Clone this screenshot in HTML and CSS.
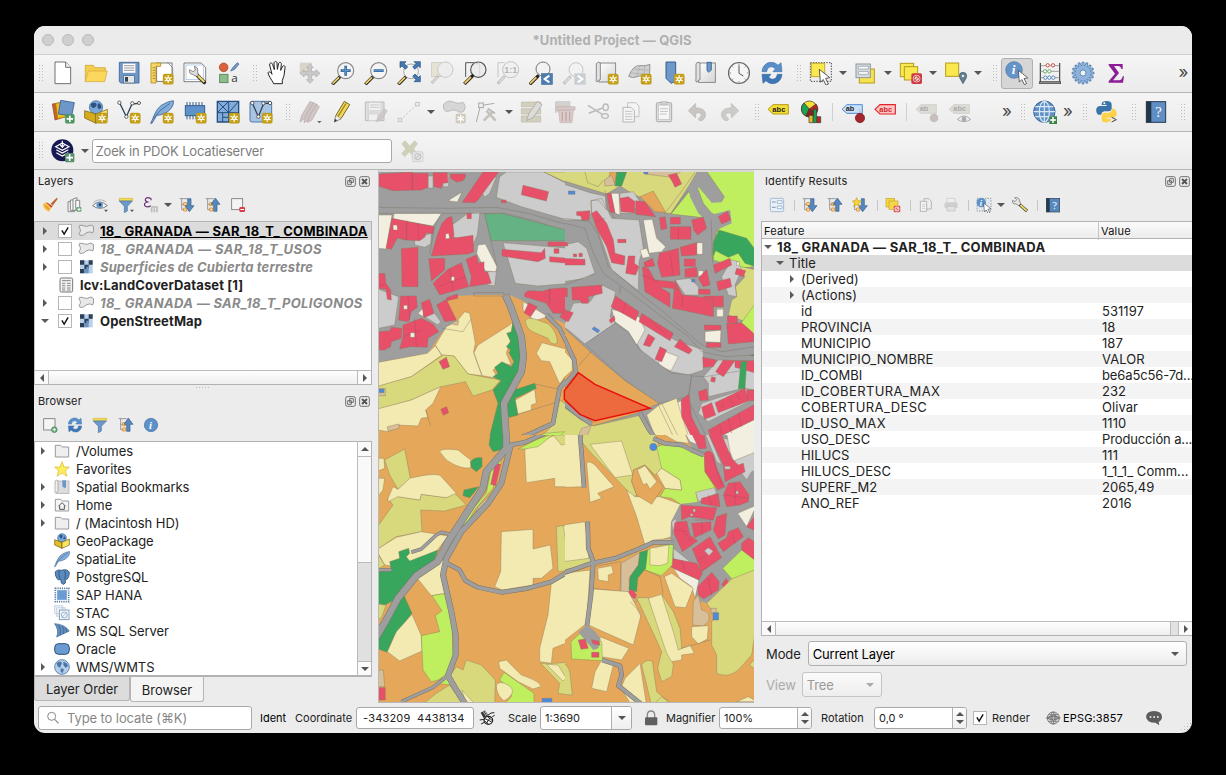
FILE: index.html
```html
<!DOCTYPE html>
<html lang="en">
<head>
<meta charset="utf-8">
<title>*Untitled Project — QGIS</title>
<link rel="stylesheet" href="styles.css">
</head>
<body>
<svg class="defs" width="0" height="0" aria-hidden="true">
<defs>
<linearGradient id="paper" x1="0" y1="0" x2="1" y2="1"><stop offset="0" stop-color="#fff"/><stop offset="1" stop-color="#d4d4d4"/></linearGradient>
<g id="star"><rect x="39" y="39" width="31" height="31" rx="5" fill="#c6a118" stroke="#b08d10"/><path d="M54.500 43V66M44 49L65 60M44 60L65 49" stroke="#fff" stroke-width="3.500"/><circle cx="54.500" cy="54.500" r="6" fill="#fff"/><circle cx="54.500" cy="54.500" r="2.500" fill="#c6a118"/></g>
<g id="plus"><rect x="43" y="43" width="27" height="27" rx="4" fill="#4f9a62" stroke="#3d7d4d"/><path d="M56.500 47V66M47 56.500H66" stroke="#fff" stroke-width="5"/></g>
<g id="handle"><path d="M28 46L4 70" stroke="#222" stroke-width="10"/><path d="M24 49L5 68" stroke="#f0cf66" stroke-width="5.500"/><path d="M26 42L32 48" stroke="#222" stroke-width="7"/></g>
<g id="pointer"><path d="M0 0L30 24 18 26 26 42 19 45 11 29 3 37Z" fill="#fff" stroke="#444" stroke-width="2.500"/></g>
<g id="ban"><rect x="37" y="37" width="32" height="32" rx="5" fill="#cf3a40"/><circle cx="53" cy="53" r="10" fill="#f4d9da" stroke="#fff" stroke-width="2"/><circle cx="53" cy="53" r="8" fill="none" stroke="#cf3a40" stroke-width="3"/><path d="M47 59L59 47" stroke="#cf3a40" stroke-width="3"/></g>

<symbol id="new" viewBox="0 0 72 72"><path d="M12 3H44L59 19V68H12Z" fill="#fff" stroke="#555" stroke-width="2.500"/><path d="M44 3V19H59" fill="#eee" stroke="#555" stroke-width="2.500"/></symbol>
<symbol id="open" viewBox="0 0 72 72"><path d="M4 61V13H28L33 20H64V30" fill="#f5cd4e" stroke="#c89c2c" stroke-width="2"/><path d="M4 62L13 30H70L62 62Z" fill="#fbd75b" stroke="#d3a834" stroke-width="2"/></symbol>
<symbol id="save" viewBox="0 0 72 72"><path d="M7 4H66V66H11L7 61Z" fill="#6d98c9" stroke="#3b6290" stroke-width="2.500"/><rect x="17" y="7" width="39" height="29" fill="#fff" stroke="#5b7fa8"/><path d="M21 14H52M21 21H52M21 28H52" stroke="#999" stroke-width="3"/><rect x="20" y="44" width="32" height="22" fill="#e6e6e6" stroke="#44617f" stroke-width="2"/><rect x="24" y="48" width="9" height="14" fill="#345"/></symbol>
<symbol id="layout" viewBox="0 0 72 72"><rect x="20" y="6" width="46" height="55" fill="#fff" stroke="#666" stroke-width="2.500"/><path d="M3 6H32V16H18V66H3Z" fill="#f8d664" stroke="#b18b1d" stroke-width="2.500"/><path d="M8 20h7M8 28h7M8 36h7M8 44h7M8 52h7" stroke="#8a6a10" stroke-width="2"/><path d="M52 4L68 20V45" fill="none" stroke="#777" stroke-width="2"/><use href="#star"/></symbol>
<symbol id="layoutmgr" viewBox="0 0 72 72"><path d="M3 6H54L68 19V62H3Z" fill="#fff" stroke="#666" stroke-width="2.500"/><rect x="9" y="12" width="52" height="44" fill="none" stroke="#9bb8dc" stroke-width="2"/><path d="M43 43L64 64" stroke="#2b2b2b" stroke-width="11" stroke-linecap="round"/><path d="M44 43L64 63" stroke="#e9d36b" stroke-width="7"/><path d="M34 16Q46 18 44 32L46 44 40 46 28 40Q16 38 20 26L30 32 37 27Z" fill="#ddd" stroke="#555" stroke-width="2"/></symbol>
<symbol id="style" viewBox="0 0 72 72"><circle cx="23" cy="19" r="13" fill="#d8603a" stroke="#a84222" stroke-width="2"/><path d="M44 30L50 20 64 5 69 9 56 25Z" fill="#6d98c9" stroke="#3b6290" stroke-width="2"/><rect x="11" y="40" width="25" height="25" fill="#8ebd8d" stroke="#557c57" stroke-width="2.500"/><text x="46" y="64" font-family="Open Sans" font-size="35" fill="#333">a</text></symbol>
<symbol id="hand" viewBox="0 0 72 72"><path d="M26 68C20 56 10 44 9 35C12 30 18 34 21 40L14 12C13 4 21 4 23 11L28 26 27 6C28 0 36 0 36 6L37 25 41 7C43 2 50 4 49 10L47 28 53 16C56 12 62 15 60 20L57 44 52 58V68Z" fill="#fff" stroke="#222" stroke-width="3"/></symbol>
<symbol id="pan" viewBox="0 0 72 72"><rect x="5" y="5" width="36" height="34" fill="#d9d6c9"/><path d="M36 8L46 20H40V32H54V26L66 37 54 48V42H41V56H47L36 67 25 56H31V42H18V48L6 37 18 26V32H31V20H26Z" fill="#cacaca" stroke="#aaa" stroke-width="2"/></symbol>
<symbol id="zin" viewBox="0 0 72 72"><use href="#handle"/><circle cx="44" cy="29" r="24" fill="#f4f4f4" stroke="#888" stroke-width="3.500"/><path d="M44 14V44M29 29H59" stroke="#31659d" stroke-width="8"/><path d="M44 17V41M32 29H56" stroke="#5e92ca" stroke-width="4"/></symbol>
<symbol id="zout" viewBox="0 0 72 72"><use href="#handle"/><circle cx="44" cy="29" r="24" fill="#f4f4f4" stroke="#888" stroke-width="3.500"/><path d="M29 29H59" stroke="#31659d" stroke-width="8"/><path d="M31 29H57" stroke="#5e92ca" stroke-width="4"/></symbol>
<symbol id="zfull" viewBox="0 0 72 72"><use href="#handle"/><circle cx="42" cy="31" r="22" fill="#f4f4f4" stroke="#999" stroke-width="2.500"/><path d="M9 2H27L22 8 32 18 25 25 15 15 9 20ZM70 2V20L64 15 54 25 47 18 57 8 51 2ZM70 62H51L57 56 47 46 54 39 64 49 70 44Z" fill="#4478ae" stroke="#234d7b" stroke-width="2"/></symbol>
<symbol id="zsel" viewBox="0 0 72 72"><rect x="5" y="5" width="28" height="42" fill="#e6e3d2" stroke="#c4c4c4" stroke-width="2"/><circle cx="46" cy="26" r="23" fill="#ededed" stroke="#c8c8c8" stroke-width="3"/><path d="M26 44L5 66" stroke="#c0c0c0" stroke-width="9"/><path d="M24 47L7 64" stroke="#dedbd0" stroke-width="4"/></symbol>
<symbol id="zlayer" viewBox="0 0 72 72"><path d="M8 48V5H34" fill="none" stroke="#555" stroke-width="3"/><circle cx="46" cy="26" r="23" fill="#ececec" stroke="#555" stroke-width="3.500"/><path d="M32 8H50V44" fill="none" stroke="#ccc" stroke-width="2"/><use href="#handle" y="-1"/></symbol>
<symbol id="znat" viewBox="0 0 72 72"><path d="M6 48V5H26" fill="none" stroke="#c5c5c5" stroke-width="3"/><circle cx="44" cy="26" r="24" fill="#f0f0f0" stroke="#c2c2c2" stroke-width="3"/><path d="M26 46L5 68" stroke="#bdbdbd" stroke-width="9"/><path d="M24 49L8 65" stroke="#e2e0d8" stroke-width="4"/><text x="25" y="35" font-family="Liberation Sans" font-weight="700" font-size="27" fill="#b5b5b5">1:1</text></symbol>
<symbol id="zlast" viewBox="0 0 72 72"><circle cx="42" cy="24" r="21" fill="#f2f2f2" stroke="#777" stroke-width="3"/><g transform="translate(-2 0)"><use href="#handle"/></g><rect x="37" y="37" width="34" height="34" fill="#4d7cae" stroke="#335f8c"/><path d="M61 44L47 54 61 64" fill="none" stroke="#fff" stroke-width="6"/></symbol>
<symbol id="znext" viewBox="0 0 72 72"><circle cx="42" cy="26" r="21" fill="#f2f2f2" stroke="#c5c5c5" stroke-width="3"/><path d="M26 46L5 68" stroke="#bdbdbd" stroke-width="9"/><path d="M24 49L8 65" stroke="#e2e0d8" stroke-width="4"/><rect x="37" y="37" width="34" height="34" fill="#c9ced3"/><path d="M47 44L61 54 47 64" fill="none" stroke="#fff" stroke-width="6"/></symbol>
<symbol id="newmap" viewBox="0 0 72 72"><rect x="12" y="6" width="50" height="57" fill="url(#paper)" stroke="#777" stroke-width="2.500"/><path d="M4 8Q10 0 16 6V56Q10 56 6 63Q2 62 4 50Z" fill="#e2e2e2" stroke="#777" stroke-width="2.500"/><use href="#star"/></symbol>
<symbol id="new3d" viewBox="0 0 72 72"><path d="M2 46Q16 12 34 14Q52 16 66 10L64 48Q40 40 24 48Q14 52 2 46Z" fill="#cfcfcf" stroke="#888" stroke-width="2.500"/><path d="M18 24L62 28M10 36L60 40M36 15L26 46M50 15L48 43" stroke="#aaa" stroke-width="2"/><use href="#star"/></symbol>
<symbol id="bmnew" viewBox="0 0 72 72"><path d="M15 3H44V60L30 67 15 52Z" fill="#6d98c9" stroke="#34608f" stroke-width="3"/><use href="#star"/></symbol>
<symbol id="bmshow" viewBox="0 0 72 72"><rect x="14" y="6" width="50" height="58" fill="url(#paper)" stroke="#777" stroke-width="2.500"/><path d="M6 8Q12 0 18 6V56Q12 56 8 64Q4 62 6 50Z" fill="#e2e2e2" stroke="#777" stroke-width="2.500"/><path d="M39 4H52V27L45 34 39 29Z" fill="#6d98c9" stroke="#34608f" stroke-width="2.500"/></symbol>
<symbol id="clock" viewBox="0 0 72 72"><circle cx="36" cy="36" r="31.500" fill="#f6f6f6" stroke="#666" stroke-width="3.500"/><path d="M36 13V37L49 45" fill="none" stroke="#555" stroke-width="3"/><path d="M36 7V12M36 60V65M7 36H12M60 36H65M16 16l3 3M56 16l-3 3M16 56l3-3M56 56l-3-3" stroke="#777" stroke-width="2.500"/></symbol>
<symbol id="refresh" viewBox="0 0 72 72"><path d="M6 32C8 4 38-4 54 13L63 5 66 32H39L46 24C36 12 22 17 20 32Z" fill="#5a8fca" stroke="#4376ad" stroke-width="2"/><path d="M66 40C64 68 34 76 18 59L9 67 6 40H33L26 48C36 60 50 55 52 40Z" fill="#3f77b6" stroke="#3a6ca3" stroke-width="2"/></symbol>
<symbol id="select" viewBox="0 0 72 72"><rect x="4" y="5" width="63" height="56" fill="none" stroke="#444" stroke-width="3" stroke-dasharray="4 4"/><rect x="7" y="7" width="40" height="40" fill="#f9e94e" stroke="#c7a92b" stroke-width="3"/><use href="#pointer" transform="translate(31 25) scale(1.050)"/></symbol>
<symbol id="selval" viewBox="0 0 72 72"><rect x="16" y="24" width="45" height="42" fill="#f6e44e" stroke="#b59b1c" stroke-width="3"/><rect x="6" y="9" width="43" height="41" fill="#d5dadd" stroke="#8b979e" stroke-width="3"/><path d="M13 16H43V24H13ZM13 32H43V40H13Z" fill="#fff" stroke="#9aa6ae" stroke-width="2.500"/></symbol>
<symbol id="desel" viewBox="0 0 72 72"><rect x="4" y="7" width="40" height="40" fill="#f9e94e" stroke="#b59b1c" stroke-width="3"/><rect x="16" y="17" width="40" height="40" fill="#f9e94e" stroke="#b59b1c" stroke-width="3"/><use href="#ban"/></symbol>
<symbol id="selloc" viewBox="0 0 72 72"><rect x="5" y="6" width="39" height="40" fill="#f9e94e" stroke="#b59b1c" stroke-width="3"/><path d="M57 68C52 58 46 52 46 45A11 11 0 0 1 68 45C68 52 62 58 57 68Z" fill="#647f91" stroke="#3f5666" stroke-width="2"/><circle cx="57" cy="45" r="4" fill="#dfe8ec"/></symbol>
<symbol id="ident" viewBox="0 0 72 72"><circle cx="27" cy="27" r="25" fill="#6594c9" stroke="#4b79ad" stroke-width="2"/><text x="20" y="40" font-family="Liberation Serif" font-style="italic" font-weight="700" font-size="40" fill="#fff">i</text><use href="#pointer" transform="translate(40 28) scale(.95)"/></symbol>
<symbol id="abacus" viewBox="0 0 72 72"><path d="M7 6V62M65 6V62" stroke="#444" stroke-width="3.500"/><path d="M7 14H65M7 31H65M7 50H65" stroke="#777" stroke-width="2"/><rect x="4" y="62" width="64" height="6" fill="#888" stroke="#444" stroke-width="2"/><g stroke-width="3" fill="#fff"><g stroke="#c94a43"><circle cx="29" cy="13" r="5"/><circle cx="45" cy="13" r="5"/></g><g stroke="#65ad68"><circle cx="21" cy="31" r="5"/><circle cx="34" cy="31" r="5"/></g><g stroke="#5684b6"><circle cx="22" cy="50" r="5"/><circle cx="34" cy="50" r="5"/><circle cx="46" cy="50" r="5"/></g></g></symbol>
<symbol id="gear" viewBox="0 0 72 72"><g stroke="#537fb0" stroke-width="9" stroke-linecap="round"><path d="M36 6V66M6 36H66M15 15L57 57M57 15L15 57M24.500 8.300L47.500 63.700M8.300 24.500L63.700 47.500M47.500 8.300L24.500 63.700M63.700 24.500L8.300 47.500"/></g><circle cx="36" cy="36" r="23" fill="#8eb3dc" stroke="#537fb0" stroke-width="1.500"/><g stroke="#8eb3dc" stroke-width="5" stroke-linecap="round"><path d="M36 7V65M7 36H65M16 16L56 56M56 16L16 56M25 9.300L47 62.700M9.300 25L62.700 47M47 9.300L25 62.700M62.700 25L9.300 47"/></g><circle cx="36" cy="36" r="9" fill="#f2f2f2" stroke="#537fb0" stroke-width="2.500"/></symbol>
<symbol id="sigma" viewBox="0 0 72 72"><path d="M14 9H56V24H52Q50 15 42 15H30L45 36 27 58H46Q54 57 56 46H60L57 65H14V61L33 38 14 13Z" fill="#8d1d97"/></symbol>

<symbol id="dsm" viewBox="0 0 72 72"><path d="M4 12L42 6 50 48 12 60Z" fill="#c8612c" stroke="#8c3f18" stroke-width="2"/><path d="M14 10L50 6 54 48 20 56Z" fill="#ecc11f" stroke="#9c7b08" stroke-width="2"/><path d="M29 1L70 8 62 48 22 42Z" fill="#6c97c8" stroke="#35608f" stroke-width="2.500"/><use href="#plus"/></symbol>
<symbol id="gpkg" viewBox="0 0 72 72"><circle cx="36" cy="22" r="20" fill="#79a7d8" stroke="#3b6793" stroke-width="2"/><path d="M20 12Q30 4 36 10T30 24Q22 26 20 12M42 10Q54 12 52 24L44 28 40 20Z" fill="#2d527e"/><path d="M2 32L36 42V70L2 54Z" fill="#d6ac1c" stroke="#6d5607" stroke-width="2"/><path d="M70 28L36 42V70L70 54Z" fill="#fbe46d" stroke="#6d5607" stroke-width="2"/><use href="#star"/></symbol>
<symbol id="shp" viewBox="0 0 72 72"><path d="M8 9L28 50 45 12 66 10" fill="none" stroke="#33465a" stroke-width="4"/><g fill="#fff" stroke="#444" stroke-width="2.500"><circle cx="7" cy="8" r="5"/><circle cx="28" cy="50" r="5"/><circle cx="46" cy="10" r="5"/><circle cx="66" cy="9" r="4.500"/></g><use href="#star"/></symbol>
<symbol id="feather" viewBox="0 0 72 72"><path d="M2 70C12 50 16 30 34 16Q52 4 70 2C72 16 62 30 48 38Q34 46 20 46L6 70Z" fill="#83aedb" stroke="#3a648f" stroke-width="2.500"/><path d="M10 56L30 32 60 10" fill="none" stroke="#3a648f" stroke-width="2.500"/></symbol>
<symbol id="spl" viewBox="0 0 72 72"><use href="#feather"/><use href="#star"/></symbol>
<symbol id="chip" viewBox="0 0 72 72"><path d="M12 6V58M21 6V58M30 6V58M39 6V58M48 6V58M57 6V58" stroke="#3d5c80" stroke-width="3"/><rect x="7" y="17" width="58" height="30" fill="#5f91cb" stroke="#315e91" stroke-width="3"/><use href="#star"/></symbol>
<symbol id="mesh" viewBox="0 0 72 72"><path d="M4 4H68V66H4Z" fill="#82aada" stroke="#254f7e" stroke-width="4"/><path d="M4 38H68M38 4V66M4 4L38 38M38 4L4 38M68 4L38 38M20 38V66M20 52H38" fill="none" stroke="#254f7e" stroke-width="3"/><use href="#star"/></symbol>
<symbol id="gpx" viewBox="0 0 72 72"><rect x="3" y="4" width="65" height="62" rx="6" fill="#a9c4e2" stroke="#4c79aa" stroke-width="3"/><path d="M10 9L28 50 44 11 64 9" fill="none" stroke="#33465a" stroke-width="4"/><g fill="#fff" stroke="#444" stroke-width="2.500"><circle cx="10" cy="9" r="5"/><circle cx="28" cy="50" r="5"/><circle cx="43" cy="10" r="5"/><circle cx="63" cy="9" r="5"/></g><use href="#star"/></symbol>
<symbol id="edits" viewBox="0 0 72 72"><g fill="#cfc6c5" stroke="#b5aaa9" stroke-width="2"><path d="M6 66L10 48 36 4 48 10 22 54Z"/><path d="M18 68L22 50 46 8 58 14 34 58Z"/><path d="M28 68L32 52 54 14 64 20 42 60Z"/></g><path d="M57 63H71L64 70Z" fill="#666"/></symbol>
<symbol id="pencil" viewBox="0 0 72 72"><path d="M10 66L15 46 40 4 56 14 30 56Z" fill="#f2d95b" stroke="#554a14" stroke-width="2.500"/><path d="M21 50L45 10" stroke="#a4881c" stroke-width="4"/><path d="M15 46L30 56 10 66Z" fill="#eee" stroke="#555"/><path d="M10 66L13 57 18 61Z" fill="#222"/></symbol>
<symbol id="saveed" viewBox="0 0 72 72"><path d="M4 6H60V62H4Z" fill="#dcdcdc" stroke="#bdbdbd" stroke-width="3"/><rect x="14" y="8" width="36" height="23" fill="#f0f0f0" stroke="#c6c6c6"/><path d="M18 15H46M18 22H46" stroke="#c4c4c4" stroke-width="2.500"/><rect x="14" y="42" width="28" height="20" fill="#efefef" stroke="#bbb"/><path d="M36 66L42 50 60 26 70 32 54 58Z" fill="#cdc9c8" stroke="#b5b2b1"/></symbol>
<symbol id="line" viewBox="0 0 72 72"><path d="M10 60L62 12" stroke="#c9c9c9" stroke-width="3" stroke-dasharray="7 5"/><path d="M4 55H14V65H4ZM56 7H67V18H56Z" fill="#eee" stroke="#bbb" stroke-width="2.500"/></symbol>
<symbol id="poly" viewBox="0 0 72 72"><path d="M4 14Q16-2 34 6T62 6Q74 18 66 32Q56 42 44 32Q34 26 20 34Q4 38 4 14Z" fill="#d6d6d6" stroke="#bbb" stroke-width="3"/><rect x="41" y="41" width="30" height="29" rx="4" fill="#cfc9bb"/><path d="M56 45V67M46 50L66 61M46 61L66 50" stroke="#fff" stroke-width="4"/></symbol>
<symbol id="vertex" viewBox="0 0 72 72"><path d="M4 66L16 18M22 16L58 10" stroke="#aaa" stroke-width="3"/><rect x="11" y="9" width="14" height="14" fill="#eee" stroke="#aaa" stroke-width="3"/><path d="M26 62L54 34M34 32L62 62" stroke="#c6c2bb" stroke-width="8"/><path d="M38 26L60 40" stroke="#bbb" stroke-width="6"/></symbol>
<symbol id="attr" viewBox="0 0 72 72"><path d="M4 6H62V20H4ZM4 26H62V42H4ZM4 48H62V66H4Z" fill="#d2cfbf" stroke="#bdbaa8" stroke-width="2"/><path d="M20 62L26 42 52 4 66 14 40 52Z" fill="#dedcd8" stroke="#b3b0ab" stroke-width="3"/></symbol>
<symbol id="trash" viewBox="0 0 72 72"><path d="M8 6H50V20M8 6V38" fill="none" stroke="#c7c7c7" stroke-width="4"/><rect x="9" y="7" width="42" height="30" fill="#d3d1cb"/><path d="M12 20H66V30H12Z" fill="#d9c8c8" stroke="#c4adad" stroke-width="2"/><path d="M17 32H61L57 68H21Z" fill="#dccdcd" stroke="#c7b0b0" stroke-width="2"/><path d="M28 36V64M39 36V64M50 36V64" stroke="#c2a6a6" stroke-width="4"/></symbol>
<symbol id="cut" viewBox="0 0 72 72"><path d="M6 16L50 44M8 40L50 24" stroke="#bcbcbc" stroke-width="5"/><ellipse cx="59" cy="22" rx="8" ry="10" fill="none" stroke="#bbb" stroke-width="4"/><ellipse cx="57" cy="48" rx="10" ry="7" fill="none" stroke="#bbb" stroke-width="4"/></symbol>
<symbol id="copy" viewBox="0 0 72 72"><path d="M26 8H50L60 18V50H26Z" fill="#f3f3f3" stroke="#bbb" stroke-width="2.500"/><path d="M12 22H36L46 32V66H12Z" fill="#f5f5f5" stroke="#aaa" stroke-width="2.500"/><path d="M18 34H40M18 42H40M18 50H40M18 58H40" stroke="#bbb" stroke-width="2.500"/></symbol>
<symbol id="paste" viewBox="0 0 72 72"><rect x="13" y="8" width="46" height="57" rx="3" fill="#ddd" stroke="#aaa" stroke-width="3"/><rect x="19" y="15" width="34" height="44" fill="#f6f6f6" stroke="#bbb" stroke-width="2"/><rect x="27" y="4" width="18" height="11" fill="#ccc" stroke="#aaa"/><path d="M24 26H48M24 34H48M24 42H44" stroke="#bbb" stroke-width="2.500"/></symbol>
<symbol id="undo" viewBox="0 0 72 72"><path d="M10 32L32 10V24C54 22 66 36 60 52Q54 64 44 62L40 56Q54 48 46 40Q42 37 32 40V54Z" fill="#c9c5c2" stroke="#b9b4b0" stroke-width="2"/></symbol>
<symbol id="redo" viewBox="0 0 72 72"><path transform="translate(72 0) scale(-1 1)" d="M10 32L32 10V24C54 22 66 36 60 52Q54 64 44 62L40 56Q54 48 46 40Q42 37 32 40V54Z" fill="#cbccca" stroke="#b9bab7" stroke-width="2"/></symbol>
<symbol id="lab" viewBox="0 0 72 72"><path d="M3 28L18 14H64V42H18Z" fill="#f6dd33" stroke="#b59b12" stroke-width="3"/><text x="16" y="35" font-family="Liberation Sans" font-weight="700" font-size="23" fill="#222">abc</text></symbol>
<symbol id="diag" viewBox="0 0 72 72"><circle cx="28" cy="27" r="24" fill="#f6dd33" stroke="#333" stroke-width="2"/><path d="M28 27L12 9A24 24 0 0 0 18 48Z" fill="#22a052" stroke="#333" stroke-width="2"/><path d="M28 27L18 48A24 24 0 0 0 49 40Z" fill="#931c1c" stroke="#333" stroke-width="2"/><path d="M28 27L48 12A24 24 0 0 1 49 40Z" fill="#b92522" stroke="#333" stroke-width="2"/><path d="M27 46H39V68H27Z" fill="#e9bb22" stroke="#333" stroke-width="2"/><path d="M40 28H50V68H40Z" fill="#1c9d4d" stroke="#333" stroke-width="2"/><path d="M51 50H62V68H51Z" fill="#c22720" stroke="#333" stroke-width="2"/></symbol>
<symbol id="labpin" viewBox="0 0 72 72"><path d="M3 28L18 14H64V40H18Z" fill="#c9e0fb" stroke="#4f8bd6" stroke-width="3"/><text x="14" y="34" font-family="Liberation Sans" font-weight="700" font-size="22" fill="#222">ab</text><path d="M56 26V46" stroke="#ccc" stroke-width="7"/><circle cx="57" cy="54" r="14" fill="#a3262c" stroke="#74161b" stroke-width="2"/></symbol>
<symbol id="labred" viewBox="0 0 72 72"><path d="M3 28L18 14H64V42H18Z" fill="#fbc6c4" stroke="#e3242b" stroke-width="3.500"/><text x="16" y="35" font-family="Liberation Sans" font-weight="700" font-size="22" fill="#d21f26">abc</text></symbol>
<symbol id="labg1" viewBox="0 0 72 72"><path d="M3 28L18 14H64V40H18Z" fill="#dedcd6" stroke="#c6c4bd" stroke-width="2"/><text x="14" y="34" font-family="Liberation Sans" font-weight="700" font-size="22" fill="#aaa">ab</text><circle cx="57" cy="54" r="13" fill="#c7bfbe"/></symbol>
<symbol id="labg2" viewBox="0 0 72 72"><path d="M3 28L18 14H64V40H18Z" fill="#dedcd6" stroke="#c6c4bd" stroke-width="2"/><text x="16" y="34" font-family="Liberation Sans" font-weight="700" font-size="22" fill="#aaa">abc</text><path d="M28 58Q48 38 68 58Q48 72 28 58Z" fill="#eee" stroke="#aaa" stroke-width="3"/><circle cx="48" cy="57" r="7" fill="#aaa"/></symbol>
<symbol id="globe" viewBox="0 0 72 72"><circle cx="34" cy="35" r="32" fill="#6392c7" stroke="#38618f" stroke-width="3"/><g fill="none" stroke="#dbe8f6" stroke-width="3.500"><ellipse cx="34" cy="35" rx="15" ry="31"/><path d="M34 3V67M2 35H66M7 20H61M7 50H61"/></g><path d="M49 49H72V72H49Z" fill="#3d8248"/><path d="M60 51V69M51 60H69" stroke="#fff" stroke-width="4.500"/></symbol>
<symbol id="python" viewBox="0 0 72 72"><path d="M22 6Q34 0 46 5Q50 8 50 14V26Q49 33 42 34H28Q20 35 18 44H10Q2 38 4 26Q6 19 14 18H35V15H20Q20 9 22 6Z" fill="#3a74a9"/><path d="M46 64Q34 70 23 65Q19 62 20 54V46Q21 39 28 38H42Q50 36 51 26H58Q66 32 65 46Q62 52 56 53H35V56H48Q49 62 46 64Z" fill="#fed14b"/><circle cx="28" cy="10" r="3" fill="#fff"/><path d="M50 52L64 59 50 66" fill="none" stroke="#444" stroke-width="3"/></symbol>
<symbol id="help" viewBox="0 0 72 72"><rect x="7" y="5" width="58" height="62" fill="#5e8ec4" stroke="#273a50" stroke-width="3"/><rect x="7" y="5" width="15" height="62" fill="#24354a"/><text x="34" y="50" font-family="Liberation Serif" font-size="44" fill="#fff">?</text></symbol>
<symbol id="pdok" viewBox="0 0 72 72"><circle cx="34" cy="34" r="33" fill="#171a52"/><g fill="none" stroke="#fff" stroke-width="3.500"><path d="M34 12L54 23 34 34 14 23Z"/><path d="M16 32L34 42 52 32M16 41L34 51 52 41M34 5V24M27 17L34 25 41 17"/></g><rect x="42" y="42" width="28" height="28" rx="4" fill="#5a8e6f"/><path d="M56 46V66M46 56H66" stroke="#fff" stroke-width="5"/></symbol>
<symbol id="xgrey" viewBox="0 0 72 72"><path d="M4 14L16 4 29 20 44 4 54 14 42 29 52 44 42 56 28 40 14 54 4 44 16 29Z" fill="#cfcfba"/><rect x="37" y="38" width="32" height="30" rx="4" fill="#e4e4e4" stroke="#c8c8c8" stroke-width="2"/><circle cx="53" cy="53" r="9" fill="none" stroke="#bdbdbd" stroke-width="3"/><path d="M46 60L60 46" stroke="#bdbdbd" stroke-width="3"/></symbol>

<symbol id="brush" viewBox="0 0 48 48"><path d="M26 20L44 2 47 6 32 26Z" fill="#b8682a"/><path d="M14 16L32 28 24 36 10 24Z" fill="#c83c35"/><path d="M2 22L12 16 28 32 20 44Q6 40 2 22Z" fill="#f4c04b"/><path d="M10 26L22 38" stroke="#e69a28" stroke-width="4"/></symbol>
<symbol id="addgrp" viewBox="0 0 48 48"><g fill="#f4f4f4" stroke="#777" stroke-width="2.500"><path d="M3 14H22V44H3Z"/><path d="M10 9H28V40H10Z"/><path d="M18 6L30 2V36L18 42Z"/><path d="M26 10H38V34H26Z"/></g><rect x="29" y="30" width="14" height="14" rx="2" fill="#5aa56b"/><path d="M36 32V42M31 37H41" stroke="#fff" stroke-width="3"/></symbol>
<symbol id="eye" viewBox="0 0 48 48"><path d="M2 26Q22 4 46 26Q24 42 2 26Z" fill="#f6f6f6" stroke="#666" stroke-width="2.500"/><circle cx="23" cy="24" r="10" fill="#6f9bcb"/><circle cx="24" cy="23" r="4" fill="#24394e"/><path d="M36 38H48L42 45Z" fill="#555"/><path d="M4 16Q22 2 42 14" fill="none" stroke="#999" stroke-width="2"/></symbol>
<symbol id="filt" viewBox="0 0 48 48"><path d="M3 4H44V11H3Z" fill="#f3dd5a" stroke="#c4a91e" stroke-width="1.500"/><path d="M4 12H43L28 28V42L19 47V28Z" fill="#6c98ca" stroke="#4472a5" stroke-width="2"/></symbol>
<symbol id="filtd" viewBox="0 0 48 48"><use href="#filt"/><path d="M36 38H48L42 45Z" fill="#555"/></symbol>
<symbol id="eps" viewBox="0 0 48 48"><path d="M24 10V5Q14-1 8 5Q4 12 14 15Q2 18 5 26Q12 33 24 26" fill="none" stroke="#6b2e78" stroke-width="3.500"/><path d="M26 46V36Q26 28 32 30H42V46M34 34V46" fill="none" stroke="#bbb" stroke-width="5"/></symbol>
<symbol id="expand" viewBox="0 0 48 48"><path d="M2 5H26M8 5V38H16M8 22H16" fill="none" stroke="#888" stroke-width="2.500"/><path d="M14 17H23V26H14ZM14 33H23V42H14Z" fill="#f7d9a8" stroke="#dd8b25" stroke-width="2.500"/><path d="M26 5H36V26H45L31 44 18 26H26Z" fill="#5687bd" stroke="#335f8f" stroke-width="2"/></symbol>
<symbol id="collapse" viewBox="0 0 48 48"><path d="M2 5H26M8 5V38H16M8 22H16" fill="none" stroke="#888" stroke-width="2.500"/><path d="M14 17H23V26H14ZM14 33H23V42H14Z" fill="#f7d9a8" stroke="#dd8b25" stroke-width="2.500"/><path d="M26 43H36V22H45L31 3 18 22H26Z" fill="#5687bd" stroke="#335f8f" stroke-width="2"/></symbol>
<symbol id="expnew" viewBox="0 0 48 48"><path d="M8 15V38H16" fill="none" stroke="#888" stroke-width="2.500"/><path d="M14 33H23V42H14Z" fill="#f7d9a8" stroke="#dd8b25" stroke-width="2.500"/><path d="M28 5H37V26H46L32 44 19 26H28Z" fill="#5687bd" stroke="#335f8f" stroke-width="2"/><path d="M14 2L18 11 28 12 20 19 23 29 14 23 5 29 8 19 1 12 10 11Z" fill="#f8d73a" stroke="#c59c16" stroke-width="2"/></symbol>
<symbol id="rem" viewBox="0 0 48 48"><rect x="5" y="5" width="33" height="33" fill="#f4f4f4" stroke="#777" stroke-width="2.500"/><rect x="28" y="30" width="17" height="15" rx="4" fill="#dc3c45"/><path d="M31 37.500H42" stroke="#fff" stroke-width="3"/></symbol>
<symbol id="addb" viewBox="0 0 48 48"><rect x="5" y="5" width="34" height="34" fill="#f4f4f4" stroke="#777" stroke-width="2.500"/><circle cx="37" cy="38" r="8.500" fill="#6aab79" stroke="#4b8559" stroke-width="2"/><path d="M37 33V43M32 38H42" stroke="#fff" stroke-width="2.500"/></symbol>
<symbol id="info" viewBox="0 0 48 48"><circle cx="24" cy="24" r="20" fill="#5d91ca" stroke="#44709f" stroke-width="2"/><text x="18" y="35" font-family="Liberation Serif" font-style="italic" font-weight="700" font-size="32" fill="#fff">i</text></symbol>
<symbol id="form" viewBox="0 0 48 48"><rect x="4" y="4" width="40" height="40" rx="4" fill="#e7f0fa" stroke="#a4b9cf" stroke-width="3"/><path d="M25 11H39V19H25ZM25 27H39V35H25Z" fill="#fff" stroke="#91abc8" stroke-width="2.500"/><path d="M9 15H20M9 31H20" stroke="#8194aa" stroke-width="3"/></symbol>
<symbol id="clr" viewBox="0 0 48 48"><rect x="3" y="4" width="26" height="26" fill="#f5d647" stroke="#c7a62a" stroke-width="2"/><rect x="12" y="12" width="27" height="25" fill="#f5d647" stroke="#c7a62a" stroke-width="2"/><rect x="26" y="26" width="20" height="20" rx="3" fill="#dc5a5c"/><circle cx="36" cy="36" r="6" fill="none" stroke="#fff" stroke-width="2.500"/><path d="M32 40L40 32" stroke="#fff" stroke-width="2"/></symbol>
<symbol id="copys" viewBox="0 0 48 48"><path d="M18 5H32L40 13V36H18Z" fill="#eee" stroke="#aaa" stroke-width="2.500"/><path d="M7 13H26V43H7Z" fill="#f5f5f5" stroke="#aaa" stroke-width="2.500"/><path d="M12 22H22M12 28H22M12 34H22" stroke="#bbb" stroke-width="2"/></symbol>
<symbol id="print" viewBox="0 0 48 48"><path d="M12 4H36V18H12Z" fill="#eee" stroke="#c6c6c6" stroke-width="2"/><rect x="4" y="16" width="40" height="18" rx="6" fill="#cfcfcf"/><path d="M12 28H36V42H12Z" fill="#e2e2e2" stroke="#c0c0c0" stroke-width="2"/></symbol>
<symbol id="idsel" viewBox="0 0 48 48"><rect x="3" y="4" width="42" height="38" fill="#dfe7f0" stroke="#888" stroke-width="2.500" stroke-dasharray="4 4"/><circle cx="16" cy="17" r="14" fill="#5d91ca"/><text x="11" y="26" font-family="Liberation Serif" font-style="italic" font-weight="700" font-size="25" fill="#fff">i</text><use href="#pointer" transform="translate(23 18) scale(.72)"/></symbol>
<symbol id="wrench" viewBox="0 0 48 48"><path d="M22 22L45 42" stroke="#333" stroke-width="9"/><path d="M25 24L44 41" stroke="#eed35f" stroke-width="6"/><path d="M8 2Q22 0 23 12L26 20 20 26 12 21Q0 22 1 10L9 14 14 8Z" fill="#e4e4e4" stroke="#666" stroke-width="2"/></symbol>
<symbol id="helps" viewBox="0 0 48 48"><rect x="4" y="4" width="40" height="41" fill="#5687bd" stroke="#2d4055" stroke-width="2"/><rect x="4" y="4" width="10" height="41" fill="#28384b"/><text x="22" y="36" font-family="Liberation Serif" font-size="32" fill="#fff">?</text></symbol>

<symbol id="polyg" viewBox="0 0 48 48"><path d="M3 12Q3 4 12 7T28 10Q40 2 46 10Q49 22 44 30Q36 24 26 29Q16 40 6 37Q0 32 7 25Q9 20 3 12Z" fill="#e8e8e8" stroke="#8b8b8b" stroke-width="2.500"/></symbol>
<symbol id="raster" viewBox="0 0 48 48"><rect x="6" y="4" width="38" height="39" fill="#b8d0ea"/><path d="M6 4H19V17H6ZM32 4H44V17H32ZM19 17H32V30H19ZM6 30H19V43H6Z" fill="#2c3f57"/><path d="M19 30H32V43H19ZM25 23H32V30H25Z" fill="#6b94c0"/></symbol>
<symbol id="table" viewBox="0 0 48 48"><rect x="6" y="3" width="38" height="42" rx="4" fill="#f2f2f2" stroke="#777" stroke-width="3"/><path d="M12 11H38M12 19H22M27 19H38M12 26H22M27 26H38M12 33H22M27 33H38M12 39H22M27 39H38" stroke="#888" stroke-width="3"/></symbol>
<symbol id="folder" viewBox="0 0 48 48"><path d="M4 42V7H20L25 12H44V42Z" fill="#efefef" stroke="#888" stroke-width="2.500"/></symbol>
<symbol id="homef" viewBox="0 0 48 48"><path d="M4 42V7H20L25 12H44V42Z" fill="#f5f5f5" stroke="#888" stroke-width="2.500"/><path d="M13 28L24 17 35 28M17 26V37H31V26" fill="none" stroke="#333" stroke-width="2.500"/></symbol>
<symbol id="fav" viewBox="0 0 48 48"><path d="M24 2L30 18 46 18 34 29 39 46 24 36 9 46 14 29 2 18 18 18Z" fill="#fcee5b" stroke="#d6b22f" stroke-width="2"/></symbol>
<symbol id="sbm" viewBox="0 0 48 48"><rect x="8" y="6" width="37" height="38" fill="#dcdcdc" stroke="#aaa" stroke-width="2"/><path d="M3 6Q7 2 12 5V38Q7 39 5 43Q2 42 3 36Z" fill="#efefef" stroke="#999" stroke-width="2"/><path d="M25 4H36V25L31 28 25 22Z" fill="#6d98c9"/></symbol>
<symbol id="gpk" viewBox="0 0 48 48"><circle cx="24" cy="15" r="13" fill="#79a7d8" stroke="#3b6793" stroke-width="2"/><path d="M15 9Q22 2 26 8L22 18Z M30 8L35 18 28 18Z" fill="#2d527e"/><path d="M2 20L24 28V46L2 36Z" fill="#e4bd25" stroke="#6d5607" stroke-width="2"/><path d="M46 18L24 28V46L46 36Z" fill="#fbe868" stroke="#6d5607" stroke-width="2"/></symbol>
<symbol id="pg" viewBox="0 0 48 48"><path d="M4 8Q12 0 22 4Q40-2 46 10Q46 24 40 30L34 32V42Q28 50 22 42L20 30Q14 36 10 30Q2 20 4 8Z" fill="#5b8abd" stroke="#2c5078" stroke-width="2.500"/><path d="M16 6Q12 18 18 28M32 6Q38 18 32 30" fill="none" stroke="#2c5078" stroke-width="2.500"/></symbol>
<symbol id="hana" viewBox="0 0 48 48"><rect x="4" y="4" width="40" height="40" fill="none" stroke="#4a7097" stroke-width="5" stroke-dasharray="3.300 3.300"/><rect x="9" y="9" width="30" height="30" fill="#6a9bd2" stroke="#fff" stroke-width="1"/></symbol>
<symbol id="stac" viewBox="0 0 48 48"><path d="M2 2H26V26H2Z M8 8H34V34H8Z" fill="#f2f6fa" stroke="#adc0d6" stroke-width="2"/><rect x="16" y="15" width="29" height="29" fill="#f0f5fa" stroke="#7392b4" stroke-width="2.500"/><circle cx="31" cy="30" r="9" fill="none" stroke="#8aa6c5" stroke-width="2.500"/><path d="M24 37L38 22" stroke="#8aa6c5" stroke-width="2"/></symbol>
<symbol id="mssql" viewBox="0 0 48 48"><path d="M2 2Q32 4 46 24L8 42Q16 22 2 2Z" fill="#6592c5" stroke="#3a618c" stroke-width="2"/><path d="M14 6Q24 22 18 36M25 10Q33 20 28 32M34 14Q40 20 37 27" fill="none" stroke="#2f527a" stroke-width="2"/></symbol>
<symbol id="ora" viewBox="0 0 48 48"><rect x="2" y="8" width="44" height="32" rx="12" fill="#6a9bd2" stroke="#2f4f72" stroke-width="3"/></symbol>
<symbol id="wms" viewBox="0 0 48 48"><circle cx="24" cy="24" r="22" fill="#b6cfe9" stroke="#4a76a6" stroke-width="2.500"/><path d="M8 12Q20 4 24 12L18 26Q10 26 8 12ZM28 8Q42 12 42 22L34 26 28 18ZM20 28L30 30 26 42 20 38Z" fill="#4b77a6"/></symbol>
<symbol id="float" viewBox="0 0 33 33"><rect x="2" y="2" width="29" height="29" rx="5" fill="#eee" stroke="#555" stroke-width="2.500"/><path d="M14 8H25V19H14ZM8 14H19V25H8Z" fill="none" stroke="#555" stroke-width="2.500"/></symbol>
<symbol id="close" viewBox="0 0 33 33"><rect x="2" y="2" width="29" height="29" rx="5" fill="#eee" stroke="#555" stroke-width="2.500"/><path d="M9 9L24 24M24 9L9 24" stroke="#555" stroke-width="6"/></symbol>
<symbol id="check" viewBox="0 0 42 42"><path d="M10 19L18 32 32 8" fill="none" stroke="#111" stroke-width="5"/></symbol>
<symbol id="mag" viewBox="0 0 42 42"><circle cx="17" cy="16" r="12" fill="none" stroke="#888" stroke-width="3"/><path d="M26 25L38 37" stroke="#888" stroke-width="3.500"/></symbol>
<symbol id="bug" viewBox="0 0 48 48"><path d="M5 8L18 1 28 16 14 24Z" fill="#333"/><path d="M12 4L22 20M17 2L26 18" stroke="#fff" stroke-width="2"/><ellipse cx="28" cy="31" rx="13" ry="12" fill="#fff" stroke="#222" stroke-width="3.500"/><path d="M18 26L38 36M22 40L34 22M16 32L28 42M26 20L40 32M26 16Q36 6 46 8M2 30L16 28M6 42L18 36M40 20L47 16" stroke="#222" stroke-width="3" fill="none"/></symbol>
<symbol id="lock" viewBox="0 0 48 48"><path d="M13 24V14Q14 3 24 3T35 14V24" fill="none" stroke="#888" stroke-width="4"/><rect x="6" y="22" width="37" height="24" rx="3" fill="#606060"/></symbol>
<symbol id="crs" viewBox="0 0 48 48"><circle cx="25" cy="24" r="18" fill="none" stroke="#777" stroke-width="3"/><ellipse cx="25" cy="24" rx="8" ry="18" fill="none" stroke="#777" stroke-width="2.500"/><path d="M25 6V42M9 14H41M9 34H41" stroke="#777" stroke-width="2.500"/><path d="M1 24L25 13 48 24 25 33Z" fill="#777"/><path d="M12 24H38M25 16V31" stroke="#ccc" stroke-width="2"/></symbol>
<symbol id="bubble" viewBox="0 0 48 48"><path d="M24 3Q47 4 48 20Q48 30 38 36L40 46 28 38Q2 38 0 20Q2 4 24 3Z" fill="#5c5c5c"/><path d="M11 21H16M22 21H27M33 21H38" stroke="#fff" stroke-width="5"/></symbol>
</defs>
</svg>

<div class="window">
  <header class="titlebar"><i></i><i></i><i></i><h1>*Untitled Project — QGIS</h1></header>

  <div class="toolbar main">
    <b class="grip"></b><svg><use href="#new"/></svg><svg><use href="#open"/></svg><svg><use href="#save"/></svg><svg><use href="#layout"/></svg><svg><use href="#layoutmgr"/></svg><svg><use href="#style"/></svg>
    <b class="grip"></b><svg><use href="#hand"/></svg><svg><use href="#pan"/></svg><svg><use href="#zin"/></svg><svg><use href="#zout"/></svg><svg><use href="#zfull"/></svg><svg><use href="#zsel"/></svg><svg><use href="#zlayer"/></svg><svg><use href="#znat"/></svg><svg><use href="#zlast"/></svg><svg><use href="#znext"/></svg><svg><use href="#newmap"/></svg><svg><use href="#new3d"/></svg><svg><use href="#bmnew"/></svg><svg><use href="#bmshow"/></svg><svg><use href="#clock"/></svg><svg><use href="#refresh"/></svg>
    <b class="grip"></b><svg><use href="#select"/></svg><b class="drop"></b><svg><use href="#selval"/></svg><b class="drop"></b><svg><use href="#desel"/></svg><b class="drop"></b><svg><use href="#selloc"/></svg><b class="drop"></b>
    <b class="grip"></b><span class="pressed"><svg><use href="#ident"/></svg></span><svg><use href="#abacus"/></svg><svg><use href="#gear"/></svg><svg><use href="#sigma"/></svg>
    <span class="more end">»</span>
  </div>

  <div class="toolbar">
    <b class="grip"></b><svg><use href="#dsm"/></svg><svg><use href="#gpkg"/></svg><svg><use href="#shp"/></svg><svg><use href="#spl"/></svg><svg><use href="#chip"/></svg><svg><use href="#mesh"/></svg><svg><use href="#gpx"/></svg>
    <b class="grip"></b><svg><use href="#edits"/></svg><svg><use href="#pencil"/></svg><svg><use href="#saveed"/></svg><svg><use href="#line"/></svg><b class="drop"></b><svg><use href="#poly"/></svg><svg><use href="#vertex"/></svg><b class="drop"></b><svg><use href="#attr"/></svg><svg><use href="#trash"/></svg><svg><use href="#cut"/></svg><svg><use href="#copy"/></svg><svg><use href="#paste"/></svg><svg><use href="#undo"/></svg><svg><use href="#redo"/></svg>
    <b class="grip"></b><svg><use href="#lab"/></svg><svg><use href="#diag"/></svg><b class="sep"></b><svg><use href="#labpin"/></svg><svg><use href="#labred"/></svg><b class="sep"></b><svg><use href="#labg1"/></svg><svg><use href="#labg2"/></svg>
    <span class="more mid">»</span><b class="grip"></b><svg><use href="#globe"/></svg><span class="more">»</span><b class="grip"></b><svg><use href="#python"/></svg><b class="grip"></b><svg><use href="#help"/></svg><b class="grip"></b>
  </div>

  <div class="toolbar pdok">
    <b class="grip"></b><svg><use href="#pdok"/></svg><b class="drop"></b><div class="search">Zoek in PDOK Locatieserver</div><svg><use href="#xgrey"/></svg>
  </div>

  <main class="body">
    <section class="left">
      <div class="docktitle"><span>Layers</span><svg><use href="#float"/></svg><svg><use href="#close"/></svg></div>
      <div class="docktools"><svg><use href="#brush"/></svg><svg><use href="#addgrp"/></svg><svg><use href="#eye"/></svg><svg><use href="#filtd"/></svg><svg><use href="#eps"/></svg><b class="drop"></b><svg><use href="#expand"/></svg><svg><use href="#collapse"/></svg><svg><use href="#rem"/></svg></div>
      <div class="layers">
        <ul>
          <li class="sel"><b class="tri"></b><span class="cb"><svg><use href="#check"/></svg></span><svg class="ic"><use href="#polyg"/></svg><em class="name l1">18_ GRANADA — SAR_18_T_ COMBINADA</em></li>
          <li class="off"><b class="tri"></b><span class="cb"></span><svg class="ic"><use href="#polyg"/></svg><em class="name l2">18_ GRANADA — SAR_18_T_USOS</em></li>
          <li class="off"><b class="tri"></b><span class="cb"></span><svg class="ic"><use href="#raster"/></svg><em class="name l3">Superficies de Cubierta terrestre</em></li>
          <li class="plain"><b class="none"></b><svg class="ic"><use href="#table"/></svg><em class="name l3">lcv:LandCoverDataset [1]</em></li>
          <li class="off"><b class="tri"></b><span class="cb"></span><svg class="ic"><use href="#polyg"/></svg><em class="name l5">18_ GRANADA — SAR_18_T_POLIGONOS</em></li>
          <li><b class="tri open"></b><span class="cb"><svg><use href="#check"/></svg></span><svg class="ic"><use href="#raster"/></svg><em class="name l3">OpenStreetMap</em></li>
        </ul>
        <div class="hbar"><span><b class="la"></b></span><i></i><span><b class="ra"></b></span></div>
      </div>
      <div class="splitter"></div>
      <div class="docktitle two"><span>Browser</span><svg><use href="#float"/></svg><svg><use href="#close"/></svg></div>
      <div class="docktools two"><svg><use href="#addb"/></svg><svg><use href="#refresh"/></svg><svg><use href="#filt"/></svg><svg><use href="#collapse"/></svg><svg><use href="#info"/></svg></div>
      <div class="browser">
        <ul>
          <li><b class="tri"></b><svg class="ic"><use href="#folder"/></svg>/Volumes</li>
          <li><b class="none"></b><svg class="ic"><use href="#fav"/></svg>Favorites</li>
          <li><b class="tri"></b><svg class="ic"><use href="#sbm"/></svg>Spatial Bookmarks</li>
          <li><b class="tri"></b><svg class="ic"><use href="#homef"/></svg>Home</li>
          <li><b class="tri"></b><svg class="ic"><use href="#folder"/></svg>/ (Macintosh HD)</li>
          <li><b class="none"></b><svg class="ic"><use href="#gpk"/></svg>GeoPackage</li>
          <li><b class="none"></b><svg class="ic"><use href="#feather"/></svg>SpatiaLite</li>
          <li><b class="none"></b><svg class="ic"><use href="#pg"/></svg>PostgreSQL</li>
          <li><b class="none"></b><svg class="ic"><use href="#hana"/></svg>SAP HANA</li>
          <li><b class="none"></b><svg class="ic"><use href="#stac"/></svg>STAC</li>
          <li><b class="none"></b><svg class="ic"><use href="#mssql"/></svg>MS SQL Server</li>
          <li><b class="none"></b><svg class="ic"><use href="#ora"/></svg>Oracle</li>
          <li><b class="tri"></b><svg class="ic"><use href="#wms"/></svg>WMS/WMTS</li>
        </ul>
        <div class="vbar"><span><b class="ua"></b></span><i></i><span><b class="da"></b></span></div>
      </div>
      <div class="tabs"><span>Layer Order</span><span class="on">Browser</span></div>
    </section>

    <section class="map">
      <svg class="canvas" viewBox="3 6 1125 1590" preserveAspectRatio="none">
        <svg x="0" y="0" width="561" height="795" class="f">
          <rect class="or" width="600" height="820"/>
          <path class="gy" d="M-5 0H575V465L510 440 440 395 395 375 290 375 240 378 205 392 235 450 190 490 150 550 0 578Z"/>
          <path class="li" d="M365 20L385 6 498 6 575 45V152L430 110 355 82ZM222 165L270 130 306 126 298 195 285 225 225 200ZM375 218L575 235V340L480 348 412 340ZM-5 355L62 380 50 465 0 475ZM308 60L340 20 355 22 335 70 320 82ZM110 205L160 190 158 222 140 232 110 225ZM300 325L330 305 355 305 350 348 332 345ZM140 440L170 430 188 455 180 465ZM195 10H212V50H195ZM150 18h15v36h-15z"/>
          <path class="ol" d="M498 6H575V42Z"/>
          <path class="wh" d="M-5 135L42 135 25 237 0 235ZM48 130H192L165 168 45 148ZM210 92L252 66 238 96ZM300 225L322 222 357 290 353 305 322 303 296 250ZM436 395L510 440 470 452 435 420ZM120 430L140 410 135 440Z"/>
          <path class="ln" d="M0 112L210 115 355 112 450 130 570 165M0 130H380L480 155 570 187M190 130L170 170 155 255M320 130L357 290"/>
          <path class="mg" d="M320 132L370 130 575 183V212H340Z"/>
          <path class="rd" d="M0 12L102 6 104 10H150V52L130 60 45 62 0 48ZM103 10V55M165 8L208 8 210 38 195 40 190 55 168 50ZM218 12H262V22L255 32 235 36 218 25ZM315 6H362L300 90 290 98 253 97ZM435 46L512 65 505 93 430 74ZM370 90h14v8h-14zM42 145L168 170 165 192 145 188 140 202 125 212 82 210 58 204 40 238 24 235ZM86 152L82 210M222 140L228 195 225 205 285 196 287 245 270 252 160 258 178 195 192 160 210 142ZM267 130h13v16h-13zM70 236L120 232V350H72ZM152 266L200 265V300L160 333ZM165 340L210 298 250 278 272 350 185 375ZM264 268L295 255 302 280 318 275V303L330 308 340 340 275 350 280 320ZM-5 312L20 310 24 340 38 360 40 390 28 388 24 358 0 355ZM68 378L115 378 118 412 100 425 92 455 62 450ZM130 398L155 388 168 430 138 443ZM176 405L205 388 235 450 200 455ZM205 383L238 372 240 385 208 392ZM75 465L130 445 165 462 182 485 150 505 148 532 95 530 65 537 75 500ZM2 485L35 482 40 472 72 475 70 505 40 515 38 530 20 540H4ZM372 238L490 248 500 235 502 265 480 275 372 258ZM510 216H570V228H510ZM515 260L570 265V280L515 275ZM528 236h15v14h-15zM440 370L450 362 495 364 515 357 575 352V385L570 430H525L505 400 440 380ZM452 398L478 410 458 440 438 428ZM515 357L512 400M545 440L560 420 575 410V460Z"/>
          <path class="rl" d="M103 10V60M86 152V210M120 160L122 210M75 500L130 480M215 295L225 360M180 350L262 320M110 445L115 530M515 357V400M20 345H0M90 380L95 450"/>
          <path class="wh" d="M45 165h12l2 15H46zM203 192l9-2 3 15-12 2zM220 320h9v12h-9zM77 406h11v12H77zM97 488h13v14H97z"/>
          <path class="cr" d="M205 470L235 455 260 425 275 430 285 480 292 520 287 545 312 617 270 612 228 558 190 555 172 525ZM-5 578L148 550 172 527 192 555 100 620 0 650ZM287 550L300 525 395 465 405 455 398 510 385 550 400 585 370 580 345 600 360 625 312 617Z"/>
          <path class="ln" d="M192 475L255 485 278 448"/>
          <path class="ol" d="M-5 650L100 620 195 555 228 558 270 612 368 630 342 660 285 678 262 635 190 650 100 690 0 718Z"/>
          <path class="cr" d="M-5 718L100 690 188 650 165 700 143 720 150 742 130 745 120 768 60 765 30 785 0 780Z"/>
          <path class="ln" d="M143 720L158 768M375 742L390 742 535 697"/>
          <path class="dg" d="M405 452L412 470 415 490 430 505V600L370 700 375 810H332L360 700 345 660 370 632 345 620 360 610 350 592 372 575 400 590 408 575 393 548 398 540 385 530 398 515 386 490 400 485Z"/>
          <path class="ta" d="M28 770L63 762V775L30 784ZM224 456L242 452 240 465 226 464ZM0 655h22v22H0z"/>
          <path class="bl" d="M3 657h15v11H3z"/>
          <path class="ol" d="M442 455Q445 440 470 447L512 462Q540 490 538 520Q520 528 510 505L470 488Q445 478 442 455Z"/>
          <path class="cr" d="M475 550L492 518 575 540V600L545 642 515 575 490 572Z"/>
          <path class="dg" d="M408 660L470 640 475 655 412 685 420 735 395 742 380 725Z"/>
          <path class="cr" d="M412 690L470 658 475 700 460 705V720L420 732Z"/>
          <path class="ol" d="M530 760L545 690 575 710V810H440L500 790Z"/>
          <path class="lm" d="M450 812L500 790 560 785 530 812Z"/>
          <path class="ln" d="M470 642L540 657"/>
          <path class="road w20" d="M382 375L398 410 430 500 436 560 430 605 378 700 385 812"/>
          <path class="road w12" d="M505 435L545 475 570 525M575 618L545 655 538 690 525 760 460 790 405 812"/>
          <path class="road in w20" d="M382 375L398 410 430 500 436 560 430 605 378 700 385 812"/>
          <path class="road in w12" d="M505 435L545 475 570 525M575 618L545 655 538 690 525 760 460 790 405 812"/>
          <path class="rd" d="M183 575L205 562 215 590 195 598 190 588ZM188 718l18-8 6 18-16 8z"/>
          <path class="ln" d="M287 368H378V378H287Z"/>
        </svg>

        <svg x="561" y="0" width="570" height="795" class="f">
          <rect class="gy" width="570" height="820"/>
          <path class="ol" d="M-5 0H400L370 50 318 130 300 130 265 100 200 70 165 48 125 72 -5 32Z"/>
          <path class="ln" d="M60 6L68 38 100 50 115 30M300 130L360 50 390 6"/>
          <path class="or" d="M225 80L265 63 303 128 270 125ZM135 6H155L150 40 130 30Z"/>
          <path class="dg" d="M155 6H185L170 48H150Z"/>
          <path class="ta" d="M118 30L140 15 150 45 120 48ZM232 4L350 4 320 22 240 12Z"/>
          <path class="lm" d="M372 65L395 110 432 138 405 142 318 132ZM425 4H575V295L500 270 440 262 448 210 458 180 490 155 495 125 465 140 440 130 415 100 392 40 440 95 470 95 478 80Z"/>
          <path class="gy" d="M372 48L395 10 415 4 478 80 466 97 440 98 400 48 398 85 440 134 495 120 500 160 460 178 440 170 400 130 375 80Z"/>
          <path class="lm" d="M455 182L540 270 566 290 520 295 445 270Z"/>
          <path class="dg" d="M462 180L545 205 575 245V290L540 280 520 250 490 262 452 242 443 260 446 215Z"/>
          <path class="ol" d="M520 288L575 300V410L540 455 490 435 500 390 515 380 512 350 540 320Z"/>
          <path class="lm" d="M575 395V505L528 460Z"/>
          <path class="li" d="M-5 42L75 68 120 78 125 120 100 90 78 92 80 125 70 150 -5 150ZM78 92L110 85 140 145 222 150 235 235 222 275 220 362 140 300 120 240 80 130ZM-5 225L40 215 65 235 90 310 60 325 -5 335ZM110 345L152 365 135 440 150 460 60 522 10 480 -5 470 25 400 75 395ZM165 70L205 65 225 95 200 130 165 130ZM330 330L375 325 400 350 405 375H360ZM150 415L235 450 330 510 415 540V600L370 615 320 605 240 560 215 520ZM415 620L460 570 575 575V660L535 655 430 680 430 640ZM410 700L545 655 560 690 430 755 400 730ZM520 275L530 300 510 345 515 380 490 375 470 320 500 270z"/>
          <path class="wh" d="M138 70H162L165 135 150 130ZM235 150L262 148 275 205 302 230 290 245 252 250 245 210ZM225 240l20-5 10 25-22 5zM395 218h18v35h-18zM140 418L222 440 240 480 215 525 190 485 150 455ZM290 540L340 560 318 603 280 585ZM420 485L468 480 466 518 420 515ZM335 700L350 690 370 760 400 812H345ZM455 415h20v25h-20zM440 810L575 745V812ZM400 302h15v16h-15zM515 275h8v12h-8z"/>
          <path class="gy s" d="M150 460L190 485 220 535 320 610 380 615 370 680 280 700 180 630 60 522Z"/>
          <path class="or" d="M-5 472L75 545 180 632 282 700 215 730 85 767 -5 705Z"/>
          <path class="ln" d="M78 545L40 588"/>
          <path class="cr" d="M-5 540L22 570V600L-5 625Z"/>
          <path class="ol" d="M-5 710L45 748 85 768 215 738 232 735 275 812H-5Z"/>
          <path class="cr" d="M245 735L282 705 335 685 345 720 375 812H275Z"/>
          <path class="ln" d="M280 705L325 800M290 700L340 800M270 812L320 800"/>
          <path class="ta" d="M50 775L80 765 60 812H35Z"/>
          <path class="ln" d="M0 145L75 155 100 195 130 290 225 370 300 430 410 525 470 545 570 530M0 160L60 175 85 250 115 310 225 390 370 500 410 545 480 560 570 555M120 60L130 120 150 145M320 128L370 60M438 150L443 280M90 310L0 345M380 615L370 690 430 812M540 600L420 620 380 618"/>
          <path class="road w12" d="M-5 500L28 570 32 605 2 640 -10 660M-8 697L45 738 80 762M225 730L250 775 275 812"/>
          <path class="road in w12" d="M-5 500L28 570 32 605 2 640 -10 660M-8 697L45 738 80 762M225 730L250 775 275 812"/>
          <path class="rd" d="M125 70H138L150 130 135 125ZM165 85L190 80 210 95 208 128 168 125ZM212 92L240 95 272 140 212 133ZM35 125L75 122 72 150 50 150 48 138 35 136ZM80 130L95 122 125 160 145 210 150 250 180 258 178 285 140 278 125 230 95 175ZM158 208h25v10h-25zM190 258L210 258 208 280 222 290 212 315 182 310ZM283 143L300 140 306 175 288 180ZM316 142h30v20h-30zM316 170h62v38h-62zM380 150L415 142 425 175 398 195 387 182ZM460 140L488 123 497 150 470 162ZM283 250L340 235 345 315 290 322 278 280ZM345 232L395 218V255L350 258ZM358 267h33v22h-33zM360 297L395 292 397 320 360 322ZM232 290L250 295 270 330 325 335 340 362 320 355 285 352 315 370V412L240 365ZM330 330L352 375 445 385V440L350 420 322 415ZM400 358h35v15h-35zM415 378h60v32h-30zM400 325L425 298 435 345 415 350zM445 285L495 265 500 285 450 310ZM455 335L495 325 500 350 460 362ZM515 295L542 302 535 320 510 312ZM236 278L262 265 270 288 240 292ZM-5 265L60 268V285H-5ZM25 252h10v8H25zM42 250h10v10H42zM-5 218H8V228H-5ZM20 352L110 345 112 370 70 380V400H50L45 390H22ZM-5 355h12v25H-5zM-5 418L25 428 10 455 -5 450ZM152 378L222 425 212 452 138 410ZM230 430L325 490 315 512 222 455ZM345 507L382 540 372 552 328 530ZM250 492L270 505 255 530 235 525ZM285 530L305 540 290 575 270 568ZM418 465L468 466V480H418ZM425 518h43v14h-43zM487 438H517V460H487ZM485 462L530 458 566 490V515L490 522ZM413 562L455 570 445 590 415 592ZM475 570L510 572 475 620 452 605ZM510 572H575V610L510 592ZM400 665L425 656 430 690 405 692ZM450 698L540 655 552 692 460 728ZM410 712L440 698 452 735 418 748ZM348 690L372 672 380 740 415 812H385L350 740ZM430 780L575 700V745L440 812ZM132 450L148 438 150 450 138 460ZM545 660H575V692H548ZM440 620l12 3-3 14-12-3z"/>
          <path class="rl" d="M90 155L120 145M165 350V370M340 170V206M315 250L325 318M230 315L280 335M352 375V410M475 715L470 700M505 710L495 680M525 690L515 670M470 800L465 765M500 790L490 745M530 770L520 730M252 450L300 490M180 400L175 430"/>
          <path class="wh" d="M455 418h20v22h-20z"/>
          <path class="dg" d="M528 575L545 573 540 655 520 657ZM556 556L575 552V560Z"/>
          <path class="rd" d="M310 15L335 10 350 42 330 52 322 35Z"/>
          <path class="bl" d="M10 63h20v10H10zM87 470l17 11-5 8-18-12zM380 328h10v8h-10zM237 6h12v6h-12z"/>
        </svg>

        <svg x="0" y="795" width="561" height="810" class="f">
          <rect class="or" width="600" height="820"/>
          <path class="cr" d="M185 50Q190 38 240 45L278 75V98Q250 105 205 75ZM440 42L530 0H540L575 25V155H530V130L445 143ZM-5 70L18 70 20 100 -5 110ZM-5 130L20 130 15 165 -5 190Z"/>
          <path class="ol" d="M525 0H575V25L550 30ZM20 75L80 42 97 130 60 163 35 120ZM-5 345V280L45 210 30 190 60 185 125 195 130 178 205 188 230 175 265 210 200 228 128 225 132 290 55 305Z"/>
          <path class="lm" d="M420 42L480 12 530 -5 480 35 440 42Z"/>
          <path class="cr" d="M30 190L45 155 60 163 95 130Q180 110 190 125L235 175 205 188 130 178 125 195 60 185 30 200ZM-5 345L55 307 130 290 210 303 160 370 80 400 20 390Z"/>
          <path class="dg" d="M335 15L338 -5H378V42L345 50 333 30ZM278 80Q290 65 312 68V95L295 110 280 98ZM258 165L302 155 275 188 255 182Z"/>
          <path class="ol" d="M-5 507H25L12 545 -5 560ZM-5 350L20 390 -5 405Z"/>
          <path class="dg" d="M-5 410L40 405 35 380 65 370 62 350 92 340 95 355 85 365 95 378 180 345 165 385 100 425 60 490 20 510 -5 505ZM75 475L102 535 50 600 28 652 -5 640V620L30 560Z"/>
          <path class="lm" d="M362 62L370 80 345 160 290 225 205 370 190 370 250 260 325 175 340 100Z"/>
          <path class="ta" d="M366 150L300 215 290 240 350 185Z"/>
          <path class="rd" d="M352 85L368 88 353 152 338 148Z"/>
          <path class="cr" d="M118 430L185 372 200 380 190 410 204 475 160 482ZM102 538L130 602 132 648 65 678 28 650 55 590ZM370 290L465 283V342L517 330 525 400 490 430H465V450L372 465 350 455 368 410Z"/>
          <path class="lm" d="M162 482L204 475 222 560 225 660 210 715 180 735 160 740 135 705 130 602 185 590 172 542 192 527Z"/>
          <path class="ol" d="M535 275L575 268V405L540 410ZM488 685L535 685 575 680V780L540 775 545 745ZM210 730L235 695 255 705 265 675 310 690 352 735 350 812H265L230 760ZM130 812L175 775 215 750 260 812Z"/>
          <path class="cr" d="M556 272H575V400ZM520 445L575 415V620L525 640 520 685 485 680V640L510 540ZM505 688L540 690 565 730 555 738ZM362 680L385 675 430 720Q490 740 488 755L465 762 420 740 365 700ZM252 765L295 812H265Z"/>
          <path class="lm" d="M378 712L468 775V812H375L400 785 400 765 365 735ZM175 745L205 715 218 750Z"/>
          <path class="cr" d="M355 750Q365 735 390 750T395 785 370 790Q355 775 355 750Z"/>
          <path class="road w20" d="M385 -5V40L325 110 315 160 262 240 210 320 178 380 115 422 60 490 22 560 -10 615"/>
          <path class="road w16" d="M398 30L370 145 330 205 250 290 205 370 195 420 220 530 233 600V660L210 722 235 765 265 812"/>
          <path class="road w14" d="M395 30L440 22 500 -5M208 385L245 405 262 437 300 457 370 472 450 460 520 440 575 408"/>
          <path class="road w9" d="M100 352L130 342 175 300 190 292 215 297M210 722L165 757 70 800M-5 405H40"/>
          <path class="road in w20" d="M385 -5V40L325 110 315 160 262 240 210 320 178 380 115 422 60 490 22 560 -10 615"/>
          <path class="road in w16" d="M398 30L370 145 330 205 250 290 205 370 195 420 220 530 233 600V660L210 722 235 765 265 812"/>
          <path class="road in w14" d="M395 30L440 22 500 -5M208 385L245 405 262 437 300 457 370 472 450 460 520 440 575 408"/>
          <path class="road in w9" d="M100 352L130 342 175 300 190 292 215 297M210 722L165 757 70 800M-5 405H40"/>
          <path class="ta" d="M3 705H16L20 755H0V720Z"/><path class="rd" d="M-5 758H22V795H-5Z"/><path class="bl" d="M492 790h30v12h-30z"/>
        </svg>

        <svg x="561" y="795" width="570" height="810" class="f">
          <rect class="or" width="600" height="820"/>
          <path class="ol" d="M55 -5H270L290 60 292 100 270 120 240 90 205 105 200 140 215 180 205 185 150 128 75 50 50 20Z"/>
          <path class="cr" d="M75 28L170 18 203 120 150 128ZM-5 -5H40L55 155 -5 157ZM65 85Q72 75 90 90L147 155 98 175 110 190 75 202ZM185 165L210 185 285 185 347 208 330 260 320 305 240 330 215 245ZM290 -5H360L372 25 335 20Z"/>
          <path class="or" d="M205 105L240 90 295 155 260 208 215 180 200 140Z"/>
          <path class="cr" d="M217 105L240 92 275 140 255 162 245 145 235 150Z"/>
          <path class="lm" d="M275 35L300 28 370 40 418 65 420 110 455 165 395 180 400 205 347 208 320 190 285 185 300 160 350 165 345 135 290 100Z"/>
          <path class="cr" d="M275 115L290 100 345 135 350 165 300 160Z"/>
          <path class="gy" d="M360 -5H575V360L500 430 425 505 395 495 390 450 405 430 325 400 315 340 318 260 345 208 400 200 395 175 455 160 420 60 380 40Z"/>
          <path class="li" d="M500 75L575 45V105L560 110 545 135ZM392 172L448 158 455 175 400 200ZM325 340L375 380 365 392 325 370ZM320 262L332 250 340 285 325 298zM420 -5H430L470 90 455 80ZM470 10L490 12 500 50 485 55Z"/>
          <path class="wh" d="M485 -5H575V50L505 78 495 50ZM518 235L575 210 545 275ZM325 400L402 435 390 490 380 455 345 430ZM360 -5H380L400 30 375 20Z"/>
          <path class="rd" d="M380 -5H418L424 40 402 42ZM430 -5H468L500 70 520 90 535 85 540 110 480 140 475 90ZM418 55Q430 40 445 58L455 100 480 155 458 165 420 110ZM475 180L490 145 525 140 552 180 550 200 525 210 485 215ZM408 205L410 190 460 176 465 215 440 212ZM348 210L455 218 445 255 372 245 350 255ZM330 262L365 258 375 300 398 318 352 350 325 290ZM380 265L438 260V285L388 308ZM455 245L485 235 480 300 460 312 445 285ZM382 342L435 305 470 368 410 410ZM458 325L485 308 490 290 520 278 535 305 475 350ZM530 325L550 308 575 325V370L555 378 530 350ZM318 370L395 385 412 415 402 435 310 392ZM398 455L440 412 463 440 460 465 415 492 400 480ZM470 450L483 430 492 445 480 460zM545 275L575 235V290Z"/>
          <path class="rl" d="M510 145V210M480 180L550 190M390 255L445 255M410 262L412 300M400 375L455 340M430 430L440 480M500 290L510 325M350 280L380 320M330 285L365 290M430 180L440 210M440 60L470 150M350 375L360 405"/>
          <path class="li" d="M418 347L430 338 445 348 432 362ZM384 222h7v8h-7zM376 236h7v7h-7zM513 168h7v9h-7zM478 94l18 0v9h-16z"/>
          <path class="lm" d="M473 400L530 345 575 380V405L505 437Z"/>
          <path class="ol" d="M425 505L500 432 575 402V560L560 660 520 705Q490 730 455 715V660L440 630V560L455 540 440 525Z"/>
          <path class="lm" d="M245 345L325 322 322 390 290 422 240 405Z"/>
          <path class="cr" d="M255 340L312 330 308 385 285 392 255 390Z"/>
          <path class="ta" d="M168 385L225 352 220 390 192 430 195 465 215 502 165 475ZM385 500L400 478 410 525Q440 530 430 560L415 573 383 570ZM438 520h16v15h-16zM240 330L265 315 320 310 318 318 260 325Z"/>
          <path class="dg" d="M225 352L248 345 242 400 218 430 215 470 192 465 195 425 220 390Z"/>
          <path class="rd" d="M185 475L200 462 215 480 208 492Z"/>
          <path class="ln" d="M168 385V470L85 460V395L168 380M240 405L285 425 295 475"/>
          <path class="ol" d="M-5 375L78 368V388L-5 405ZM215 488L250 488 300 610 325 690 320 725 290 740 278 700 290 650 265 595ZM290 478L325 530 345 580 350 640 330 657 315 610ZM230 690Q240 672 262 678L275 770 310 800 260 812 245 750ZM-5 685Q10 690 15 715L22 780 -5 778ZM575 665L553 690 575 705ZM290 785L330 812H260Z"/>
          <path class="cr" d="M-5 270L60 260 72 370 -5 380ZM-5 415L75 405 65 565 -5 620ZM98 400L140 392 145 415 130 420V440L100 435ZM85 462L190 470 228 540 205 630 70 570ZM298 425L320 415 385 460 362 518 330 515ZM250 490L290 478 325 590 340 645 375 630 388 655 350 660 350 675 320 680 305 655ZM380 575L430 572 427 612 400 627 380 605ZM105 605L192 640 170 675 108 665ZM112 672L145 690 140 710 125 770 80 760 90 710ZM168 760L180 730 225 685 245 812H200ZM515 800L550 785 575 800Z"/>
          <path class="ln" d="M350 640L385 630 435 615M195 500L215 520 228 545"/>
          <path class="lm" d="M18 620L45 595 70 605 110 620 112 677 20 672Z"/>
          <path class="gy" d="M40 592L65 570 92 590 105 610 100 640 85 645 60 615Z"/>
          <path class="rd" d="M40 615L60 612 70 640 48 643ZM80 614l22 5 3 12-22-5zM80 652h22v15H80z"/>
          <path class="road w14" d="M45 -5L50 60 57 157M265 10L300 25 350 30 380 45 415 60M68 260L70 340 85 380 78 480 66 572M-8 415L80 385 150 370 225 340 265 322 325 322M112 675L165 692 170 720 160 752 235 812"/>
          <path class="road in w14" d="M45 -5L50 60 57 157M265 10L300 25 350 30 380 45 415 60M68 260L70 340 85 380 78 480 66 572M-8 415L80 385 150 370 225 340 265 322 325 322M112 675L165 692 170 720 160 752 235 812"/>
          <circle class="bl" cx="265" cy="36" r="11"/><path class="bl" d="M444 533h17v22h-17z"/>
        </svg>
        <path d="M601 608L651 643 816 715 651 752 606 733 559 688V662Z" fill="#ed6a3e" stroke="#e8100c" stroke-width="4.500"/>
      </svg>
    </section>

    <section class="right">
      <div class="docktitle"><span>Identify Results</span><svg><use href="#float"/></svg><svg><use href="#close"/></svg></div>
      <div class="docktools"><svg><use href="#form"/></svg><b class="sep"></b><svg><use href="#expand"/></svg><svg><use href="#collapse"/></svg><svg><use href="#expnew"/></svg><b class="sep"></b><svg><use href="#clr"/></svg><b class="sep"></b><svg><use href="#copys"/></svg><svg><use href="#print"/></svg><b class="sep"></b><svg><use href="#idsel"/></svg><b class="drop"></b><svg><use href="#wrench"/></svg><b class="sep"></b><svg><use href="#helps"/></svg></div>
      <div class="results">
        <div class="head"><span>Feature</span><span>Value</span></div>
        <div class="row top"><b class="tri open"></b><strong>18_ GRANADA — SAR_18_T_ COMBINADA</strong></div>
        <div class="row title"><b class="tri open"></b>Title</div>
        <div class="row sub"><b class="tri"></b>(Derived)</div>
        <div class="row sub alt"><b class="tri"></b>(Actions)</div>
        <div class="row"><span>id</span><span>531197</span></div>
        <div class="row alt"><span>PROVINCIA</span><span>18</span></div>
        <div class="row"><span>MUNICIPIO</span><span>187</span></div>
        <div class="row alt"><span>MUNICIPIO_NOMBRE</span><span>VALOR</span></div>
        <div class="row"><span>ID_COMBI</span><span class="tight">be6a5c56-7d...</span></div>
        <div class="row alt"><span class="wide">ID_COBERTURA_MAX</span><span>232</span></div>
        <div class="row"><span class="wide">COBERTURA_DESC</span><span>Olivar</span></div>
        <div class="row alt"><span class="wide">ID_USO_MAX</span><span>1110</span></div>
        <div class="row"><span>USO_DESC</span><span class="tight">Producción a...</span></div>
        <div class="row alt"><span>HILUCS</span><span>111</span></div>
        <div class="row"><span>HILUCS_DESC</span><span>1_1_1_ Comm...</span></div>
        <div class="row alt"><span>SUPERF_M2</span><span>2065,49</span></div>
        <div class="row"><span>ANO_REF</span><span>2016</span></div>
        <div class="hbar"><span><b class="la"></b></span><i></i><u></u><span><b class="ra"></b></span></div>
      </div>
      <div class="mode"><label>Mode</label><div class="combo">Current Layer<b class="drop"></b></div></div>
      <div class="mode view"><label>View</label><div class="combo">Tree<b class="drop"></b></div></div>
    </section>
  </main>

  <footer class="status">
    <div class="locate"><svg><use href="#mag"/></svg>Type to locate (⌘K)</div>
    <span class="ident">Ident</span><span class="coordl">Coordinate</span>
    <div class="box coord">-343209&nbsp; 4438134</div>
    <svg class="sic bugi"><use href="#bug"/></svg>
    <span class="scalel">Scale</span><div class="box scale">1:3690<i><b class="drop"></b></i></div>
    <svg class="sic locki"><use href="#lock"/></svg>
    <span class="magl">Magnifier</span><div class="box spin">100%<i><b class="ua"></b><b class="da"></b></i></div>
    <span class="rotl">Rotation</span><div class="box spin">0,0 °<i><b class="ua"></b><b class="da"></b></i></div>
    <span class="cb"><svg><use href="#check"/></svg></span><span class="renl">Render</span>
    <svg class="sic crsi"><use href="#crs"/></svg><span class="epsg">EPSG:3857</span>
    <svg class="sic bubi"><use href="#bubble"/></svg>
    <b class="resize"></b>
  </footer>
</div>
</body>
</html>
```
FILE: styles.css
```css
* { box-sizing: border-box; }
body { margin: 0; background: #000; width: 1226px; height: 775px; padding: 26px 34px; overflow: hidden; font: 13px/18px Inter, "Noto Sans", sans-serif; color: #222; }
.defs { position: absolute; }
ul { list-style: none; margin: 0; padding: 0; }
.window { width: 1158px; height: 707px; background: #ececec; border-radius: 11px; overflow: hidden; display: flex; flex-direction: column; }

.titlebar { height: 29px; flex: none; display: flex; align-items: center; padding-left: 8px; gap: 8px; border-bottom: 1px solid #d0d0d0; background: #ebebeb; }
.titlebar i { width: 12px; height: 12px; flex: none; border-radius: 50%; background: #cfcfcf; border: 1px solid #b9b9b9; }
.titlebar h1 { flex: 1; margin: 0 70px 0 0; text-align: center; font-size: 13px; line-height: 16px; padding-bottom: 1px; font-weight: 700; color: #b0b0b0; letter-spacing: .1px; }

.toolbar { height: 39px; flex: none; display: flex; align-items: center; background: linear-gradient(#f5f5f5, #ebebeb); border-bottom: 1px solid #b5b5b5; }
.toolbar.main { height: 38px; padding-bottom: 1px; }
.toolbar.pdok { height: 38px; }
.toolbar svg { width: 24px; height: 24px; flex: none; margin: 0 4.500px; }
.grip { width: 16px; height: 17px; flex: none; background: repeating-linear-gradient(#bdbdbd 0 1px, transparent 1px 3px) 8px 0 / 1px 17px no-repeat, repeating-linear-gradient(#bdbdbd 0 1px, transparent 1px 3px) 11px 0 / 1px 17px no-repeat; }
.toolbar > .grip:first-child { margin-left: -3.500px; }
.drop { width: 12px; flex: none; display: flex; justify-content: center; }
.drop::after { content: ""; border: 4px solid transparent; border-top: 4.500px solid #555; border-bottom: 0; }
.toolbar .drop { padding-right: 2px; }
.sep { width: 8px; height: 18px; flex: none; background: linear-gradient(#d0d0d0, #d0d0d0) 3px 0 / 1px 100% no-repeat; }
.pressed { width: 32px; height: 31px; margin-right: 1px; border: 1px solid #b0b0b0; border-radius: 3px; background: #d6d6d6; display: flex; align-items: center; justify-content: center; flex: none; }
.pressed svg { margin: 0; }
.more { width: 13px; flex: none; text-align: center; font-size: 17px; color: #444; line-height: 14px; padding-bottom: 3px; }
.more.end { margin-left: auto; margin-right: 2px; }
.more.mid { margin-left: 24px; margin-right: -1px; }
.search { width: 300px; height: 24px; margin: 0 4px 0 0; border: 1px solid #a9a9a9; border-radius: 3px; background: #fff; color: #7d7d7d; padding: 2px 3px; letter-spacing: -.17px; }

.body { flex: 1; display: grid; grid-template-columns: 344px 376px minmax(0, 1fr); min-height: 0; }
.left { width: 338px; display: flex; flex-direction: column; }
.docktitle { height: 21px; flex: none; display: flex; align-items: center; gap: 3px; padding: 1px 2px 0 4px; font-size: 11px; letter-spacing: .15px; }
.docktitle span { flex: 1; }
.docktitle svg { width: 11px; height: 11px; flex: none; }
.docktools { height: 30px; flex: none; display: flex; align-items: center; padding: 0 0 2px 8px; }
.docktools svg { width: 16px; height: 16px; flex: none; margin-right: 9.200px; }
.docktools .drop { margin: 0 5px 0 -5.500px; }
.layers { height: 164px; flex: none; border: 1px solid #b2b2b2; border-left-color: #c4c4c4; background: #fff; display: flex; flex-direction: column; }
.layers ul { flex: 1; }
.layers li { height: 18px; display: flex; align-items: center; padding-left: 5px; white-space: nowrap; }
.tri { width: 9px; height: 8px; flex: none; display: flex; justify-content: center; align-items: center; }
.tri::after { content: ""; border: 4px solid transparent; border-left: 4.500px solid #5a5a5a; border-right: 0; }
.tri.open::after { border: 4px solid transparent; border-top: 4.500px solid #5a5a5a; border-bottom: 0; }
.none { width: 9px; flex: none; }
.cb { width: 14px; height: 14px; flex: none; border: 1px solid #b6b6b6; background: #fff; }
.cb svg { display: block; width: 12px; height: 12px; }
.layers .cb { margin: 0 6px 0 9px; }
.ic { width: 16px; height: 16px; flex: none; }
.layers .ic { margin-right: 6px; }
.layers .plain .ic { margin: 0 6px 0 9px; }
.layers .sel { background: #dcdcdc; color: #000; }
.name { font-style: normal; font-weight: 700; }
.l1 { letter-spacing: .27px; }
.l2 { letter-spacing: .45px; }
.l3 { letter-spacing: .13px; }
.l5 { letter-spacing: .34px; }
.sel .name { text-decoration: underline; }
.off .name { font-style: italic; color: #8a8a8a; }
.hbar { height: 14px; flex: none; display: flex; border-top: 1px solid #bbb; background: #e2e2e2; }
.hbar span { width: 13px; background: #fafafa; display: flex; align-items: center; justify-content: center; }
.hbar i { flex: 1; border: solid #bbb; border-width: 0 1px; background: linear-gradient(#fdfdfd, #efefef); }
.hbar u { width: 8px; border-right: 1px solid #bbb; }
.la { border: 4px solid transparent; border-right: 4.500px solid #555; border-left: 0; }
.ra { border: 4px solid transparent; border-left: 4.500px solid #555; border-right: 0; }
.ua { border: 4px solid transparent; border-bottom: 4.500px solid #555; border-top: 0; }
.da { border: 4px solid transparent; border-top: 4.500px solid #555; border-bottom: 0; }
.splitter { height: 4px; flex: none; background: radial-gradient(circle, #bbb 0.800px, transparent 1px) 161px 1px / 3px 3px repeat-x; background-clip: content-box; padding: 0 161px; }
.docktitle.two { height: 24px; padding-top: 0; }
.docktools.two { padding-bottom: 4px; height: 28px; }
.browser { height: 235px; flex: none; border: 1px solid #b2b2b2; background: #fff; display: flex; overflow: hidden; }
.browser ul { flex: 1; height: 233px; overflow: hidden; }
.browser li { height: 18px; display: flex; align-items: center; padding-left: 3px; white-space: nowrap; letter-spacing: -.05px; }
.browser .ic { margin: 0 6px 0 7px; }
.vbar { width: 14px; display: flex; flex-direction: column; border-left: 1px solid #bbb; background: #e0e0e0; }
.vbar span { height: 14px; background: #fafafa; display: flex; align-items: center; justify-content: center; }
.vbar i { height: 107px; margin-bottom: auto; border: solid #bbb; border-width: 1px 0; background: #f9f9f9; }
.vbar span:last-child { border-top: 1px solid #bbb; }
.tabs { display: flex; align-items: flex-start; border-top: 1px solid #b2b2b2; }
.tabs span { height: 24px; width: 96px; text-align: center; line-height: 24px; background: #dcdcdc; border: 1px solid #b5b5b5; border-top: 0; border-radius: 0 0 3px 3px; letter-spacing: -.05px; }
.tabs .on { height: 25px; width: 74px; background: #f4f4f4; line-height: 26px; }

.map { border: solid #b8b8b8; border-width: 2px 0 1px 1px; height: 533px; border-top-color: #d8d8d8; background: #b8b8b8; }
.canvas { display: block; width: 375px; height: 530px; }
.f path, .f circle { stroke: #85765b; stroke-width: 1.600; stroke-opacity: .75; }
.or { fill: #e5a85a; } .gy { fill: #9e9e9e; } .li { fill: #cccccd; } .wh { fill: #f2eee0; }
.mg { fill: #65b384; } .dg { fill: #39a65d; } .lm { fill: #bfef5f; } .ol { fill: #d8d97d; }
.cr { fill: #f2eab0; } .ta { fill: #d6bf99; } .rd { fill: #e8506a; } .bl { fill: #4a8be0; }
.f .gy { stroke: none; } .f .gy.s { stroke: #777; }
.f .ln { fill: none; stroke: #7a7262; } .f .rl { fill: none; stroke: #a8475a; }
.f .road { fill: none; stroke: #77736c; stroke-opacity: 1; stroke-linejoin: round; }
.f .w20 { stroke-width: 22; } .f .w16 { stroke-width: 18; } .f .w14 { stroke-width: 14; } .f .w12 { stroke-width: 14; } .f .w9 { stroke-width: 11; }
.f .road.in { stroke: #9e9e9e; }
.f .in.w20 { stroke-width: 19; } .f .in.w16 { stroke-width: 15; } .f .in.w14 { stroke-width: 11; } .f .in.w12 { stroke-width: 11; } .f .in.w9 { stroke-width: 8; }

.right { padding-left: 7px; display: flex; flex-direction: column; min-width: 0; }
.right .docktools { padding-left: 8px; }
.right .docktools svg { margin-right: 9px; }
.right .docktools .sep { height: 11px; width: 0; margin: 0 7px 0 0; border-left: 1px solid #c6c6c6; background: none; }
.right .docktools .drop { margin: 0 5px 0 -6px; }
.results { height: 415px; flex: none; border: 1px solid #b2b2b2; border-right: 0; background: #fff; display: flex; flex-direction: column; }
.results .head { height: 17px; flex: none; display: grid; grid-template-columns: 336px 1fr; font-size: 11px; line-height: 18px; letter-spacing: .2px; border-bottom: 1px solid #b2b2b2; background: linear-gradient(#fbfbfb, #ececec); color: #111; }
.head span { padding-left: 2px; }
.head span + span { border-left: 1px solid #c4c4c4; }
.row { height: 16px; flex: none; display: grid; grid-template-columns: 301px 1fr; padding-left: 39px; line-height: 16px; letter-spacing: .05px; white-space: nowrap; align-items: center; }
.row strong { letter-spacing: .29px; }
.row .tight { letter-spacing: -.13px; }
.row .wide { letter-spacing: .38px; }
.row.alt { background: #f4f4f4; }
.row.top, .row.title, .row.sub { display: flex; padding-left: 1px; }
.row .tri { margin-right: 5px; }
.row.title { padding-left: 13px; background: #dcdcdc; }
.row.sub { padding-left: 25px; }
.results .hbar { margin-top: auto; }
.mode { display: flex; align-items: center; margin-top: 5px; padding: 0 5px; gap: 7px; }
.mode label { letter-spacing: -.1px; }
.combo { flex: 1; height: 25px; border: 1px solid #b0b0b0; border-radius: 3px; background: linear-gradient(#fff, #ececec); padding: 0 5px 0 4px; display: flex; align-items: center; justify-content: space-between; color: #000; letter-spacing: -.15px; }
.view { margin-top: 6px; gap: 6px; color: #ababab; }
.view .combo { flex: none; width: 80px; color: #999; background: linear-gradient(#fafafa, #eee); border-color: #c4c4c4; }
.view .drop::after { border-top-color: #aaa; }

.status { height: 29px; flex: none; display: flex; align-items: center; padding: 0 0 1px 4px; font-size: 11px; color: #222; white-space: nowrap; }
.locate { width: 214px; height: 24px; border: 1px solid #a9a9a9; border-radius: 3px; background: #fff; display: flex; align-items: center; gap: 7px; padding-left: 7px; font-size: 13px; color: #868686; letter-spacing: -.1px; }
.locate svg { width: 14px; height: 14px; }
.status > * { flex: none; }
.ident { width: 35px; margin-left: 8px; color: #000; }
.coordl { width: 61px; }
.box { height: 22px; border: 1px solid #a9a9a9; border-radius: 3px; background: #fff; display: flex; align-items: center; justify-content: space-between; color: #222; padding-left: 4px; overflow: hidden; }
.coord { width: 118px; padding-left: 6px; letter-spacing: .2px; }
.sic { width: 16px; height: 16px; }
.bugi { margin: 0 13px 0 5px; }
.scalel { width: 32px; }
.scale { width: 92px; height: 24px; }
.box i { width: 20px; height: 24px; border-left: 1px solid #b0b0b0; display: flex; flex-direction: column; align-items: center; justify-content: center; gap: 4px; background: linear-gradient(#fff, #eee); }
.spin { width: 93px; }
.spin i { width: 14px; }
.locki { margin: 0 7px 0 11px; }
.magl { width: 53px; }
.rotl { width: 53px; margin-left: 9px; }
.status > .cb { margin: 0 5px 0 6px; }
.renl { width: 53px; letter-spacing: .15px; }
.crsi { margin-right: 2px; }
.epsg { width: 83px; color: #000; letter-spacing: .15px; }
.resize { width: 12px; height: 12px; margin: 14px 0 0 auto; background: radial-gradient(circle, #aaa 0.700px, transparent 1px) 0 0 / 3px 3px; clip-path: polygon(100% 0, 100% 100%, 0 100%); }
```
